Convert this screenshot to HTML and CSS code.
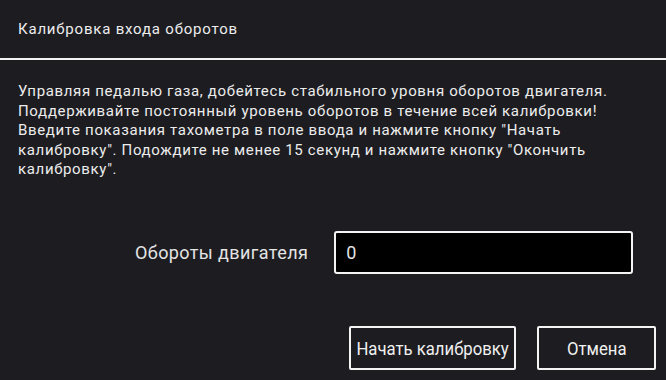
FILE: index.html
```html
<!DOCTYPE html>
<html lang="ru">
<head>
<meta charset="utf-8">
<title>Калибровка входа оборотов</title>
<link rel="stylesheet" href="styles.css">
</head>
<body>
<div class="dialog">
  <div class="header">Калибровка входа оборотов</div>
  <div class="divider"></div>
  <div class="content">
    <p class="message">Управляя педалью газа, добейтесь стабильного уровня оборотов двигателя. Поддерживайте постоянный уровень оборотов в течение всей калибровки! Введите показания тахометра в поле ввода и нажмите кнопку "Начать калибровку". Подождите не менее 15 секунд и нажмите кнопку "Окончить калибровку".</p>
    <div class="field">
      <label class="field-label" for="rpm">Обороты двигателя</label>
      <input class="field-input" id="rpm" type="text" value="0">
    </div>
  </div>
  <div class="footer">
    <button class="btn btn-start"><span class="btn-text">Начать калибровку</span></button>
    <button class="btn btn-cancel"><span class="btn-text">Отмена</span></button>
  </div>
</div>
</body>
</html>
```
FILE: styles.css
```css
html, body {
  margin: 0;
  padding: 0;
  background: #1c1c21;
}
body {
  font-family: Roboto, "Noto Sans", sans-serif;
  color: #e8e8e8;
}
.dialog {
  width: 666px;
  height: 380px;
  display: flex;
  flex-direction: column;
  background: #1c1c21;
}
.header {
  height: 58px;
  display: flex;
  align-items: center;
  padding-left: 18px;
  font-size: 15px;
  letter-spacing: 0.8px;
  color: #ededed;
}
.divider {
  height: 2px;
  background: #f2f2f2;
}
.content {
  padding: 22px 18px 0 18px;
}
.message {
  margin: 0;
  font-size: 15px;
  line-height: 19.5px;
  letter-spacing: 0.65px;
  color: #ececec;
}
.field {
  display: flex;
  align-items: center;
  gap: 26px;
  margin-top: 51px;
  padding-left: 117px;
}
.field-label {
  font-size: 18px;
  letter-spacing: 0.4px;
  color: #e4e4e4;
}
.field-input {
  box-sizing: border-box;
  width: 299px;
  height: 43px;
  background: #000;
  border: 2px solid #f4f4f4;
  border-radius: 3px;
  color: #e4e4e4;
  font-family: Roboto, "Noto Sans", sans-serif;
  font-size: 18px;
  padding: 0 10px;
  outline: none;
}
.footer {
  margin-top: auto;
  display: flex;
  justify-content: flex-end;
  gap: 21px;
  padding: 0 10px 10px 0;
}
.btn {
  box-sizing: border-box;
  height: 44px;
  background: transparent;
  border: 2px solid #f4f4f4;
  border-radius: 2px;
  color: #f0f0f0;
  font-family: Roboto, "Noto Sans", sans-serif;
  font-size: 19px;
  padding: 0;
  display: flex;
  align-items: center;
  justify-content: center;
  overflow: hidden;
}
.btn-start {
  width: 167px;
}
.btn-cancel {
  width: 119px;
}
.btn-text {
  display: inline-block;
  white-space: nowrap;
  transform: scaleX(0.88);
}
```
